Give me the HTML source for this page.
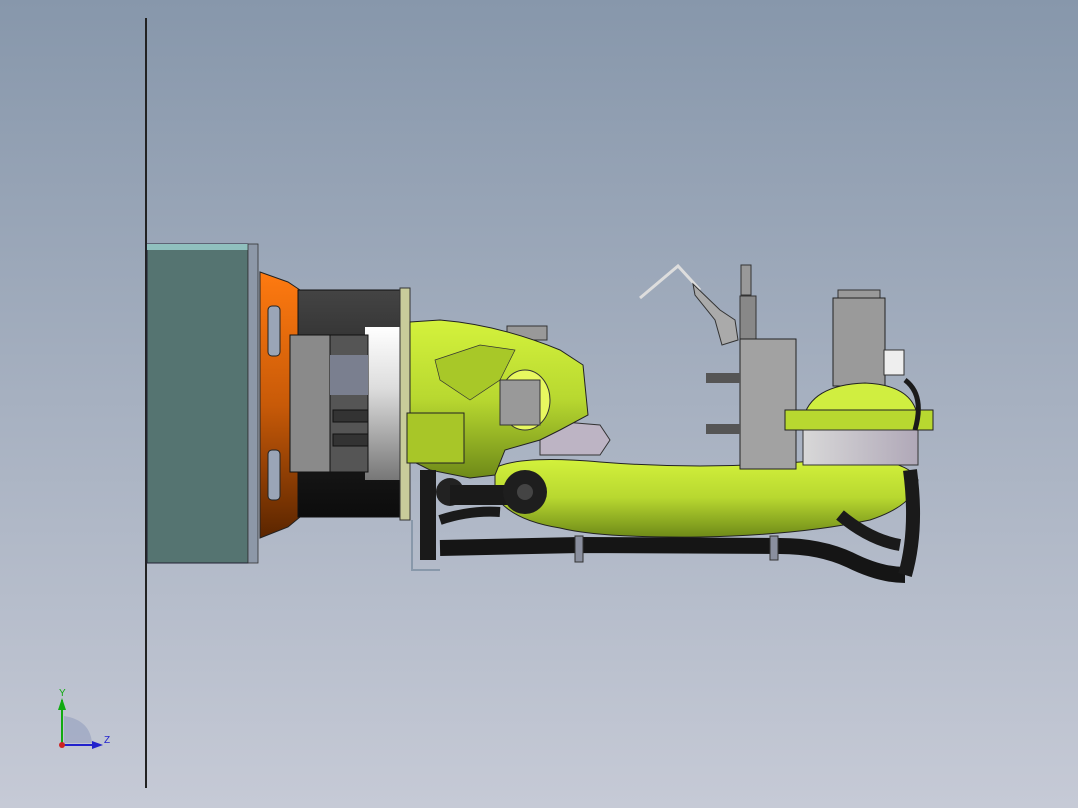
<!DOCTYPE html>
<html><head><style>
html,body{margin:0;padding:0;width:1078px;height:808px;overflow:hidden;background:linear-gradient(#8797ab,#c6cad6);}
svg{position:absolute;left:0;top:0}
</style></head><body>
<svg width="1078" height="808" viewBox="0 0 1078 808" xmlns="http://www.w3.org/2000/svg">
<defs>
<linearGradient id="drum" x1="0" y1="0" x2="0" y2="1"><stop offset="0" stop-color="#444"/><stop offset="0.5" stop-color="#222"/><stop offset="1" stop-color="#0c0c0c"/></linearGradient>
<linearGradient id="white" x1="0" y1="0" x2="0" y2="1"><stop offset="0" stop-color="#fff"/><stop offset="0.4" stop-color="#ddd"/><stop offset="1" stop-color="#777"/></linearGradient>
<linearGradient id="org" x1="0" y1="0" x2="0" y2="1"><stop offset="0" stop-color="#ff7a10"/><stop offset="0.5" stop-color="#c85a08"/><stop offset="1" stop-color="#5a2500"/></linearGradient>
<linearGradient id="grn" x1="0" y1="0" x2="0" y2="1"><stop offset="0" stop-color="#d4f23c"/><stop offset="0.5" stop-color="#b8d830"/><stop offset="1" stop-color="#6e8a18"/></linearGradient>
<linearGradient id="ring" x1="0" y1="0" x2="1" y2="0"><stop offset="0" stop-color="#d8d8d8"/><stop offset="1" stop-color="#b0a8b8"/></linearGradient>
</defs>
<rect x="145" y="18" width="2" height="770" fill="#222"/>
<!-- teal box -->
<rect x="147" y="244" width="101" height="319" fill="#557471" stroke="#223" stroke-width="1"/>
<rect x="147" y="244" width="101" height="6" fill="#90c0be"/>
<rect x="248" y="244" width="10" height="319" fill="#8d98a8" stroke="#333" stroke-width="0.8"/>
<!-- orange flange -->
<path d="M260 272 L288 282 L300 290 L300 517 L288 527 L260 538 Z" fill="url(#org)" stroke="#222"/>
<rect x="268" y="306" width="12" height="50" rx="4" fill="#9aa5b7" stroke="#222"/>
<rect x="268" y="450" width="12" height="50" rx="4" fill="#9aa5b7" stroke="#222"/>
<!-- drum -->
<rect x="298" y="290" width="102" height="227" fill="url(#drum)" stroke="#111"/>
<rect x="365" y="327" width="35" height="153" fill="url(#white)"/>
<rect x="290" y="335" width="40" height="137" fill="#8a8a8a" stroke="#111"/>
<rect x="330" y="335" width="38" height="137" fill="#555" stroke="#111"/>
<rect x="330" y="355" width="38" height="40" fill="#7a7f8f"/>
<rect x="333" y="410" width="35" height="12" fill="#333" stroke="#111"/>
<rect x="333" y="434" width="35" height="12" fill="#333" stroke="#111"/>
<rect x="400" y="288" width="10" height="232" fill="#c8cc9a" stroke="#333"/>
<!-- back parts near arm -->
<rect x="507" y="326" width="40" height="14" fill="#999" stroke="#333"/>
<path d="M540 420 L600 425 L610 440 L600 455 L540 455 Z" fill="#bdb4c4" stroke="#333"/>
<!-- lower arm -->
<path d="M495 468 Q520 455 600 462 Q700 470 800 462 L860 458 Q910 462 918 480 Q915 505 870 520 Q800 535 700 537 Q600 538 560 528 Q510 520 495 495 Z" fill="url(#grn)" stroke="#222"/>
<!-- main green body -->
<path d="M410 322 L440 320 Q500 325 560 350 L583 365 L588 415 L560 430 L540 440 L505 450 L495 475 L470 478 L430 470 L410 460 Z" fill="url(#grn)" stroke="#222"/>
<path d="M435 360 L480 345 L515 350 L500 380 L470 400 L440 380 Z" fill="#a8c828" stroke="#333" stroke-width="0.7"/>
<ellipse cx="525" cy="400" rx="25" ry="30" fill="#e8f860" stroke="#333"/>
<rect x="500" y="380" width="40" height="45" fill="#999" stroke="#333"/>
<rect x="407" y="413" width="57" height="50" fill="#a8c628" stroke="#222"/>
<!-- joints -->
<circle cx="450" cy="492" r="14" fill="#222"/>
<rect x="450" y="485" width="70" height="20" fill="#1a1a1a"/>
<circle cx="525" cy="492" r="22" fill="#1e1e1e"/>
<circle cx="525" cy="492" r="8" fill="#444"/>
<!-- left hoses -->
<path d="M428 470 L428 560" stroke="#1a1a1a" stroke-width="16" fill="none"/>
<path d="M412 520 L412 570 L440 570" stroke="#8898aa" stroke-width="2" fill="none"/>
<path d="M440 548 L580 545 L780 546 Q820 546 850 560 Q880 575 905 575" stroke="#151515" stroke-width="16" fill="none"/>
<path d="M840 515 Q870 540 900 545" stroke="#1a1a1a" stroke-width="12" fill="none"/>
<path d="M910 470 Q918 530 905 575" stroke="#1a1a1a" stroke-width="14" fill="none"/>
<path d="M440 520 Q470 510 500 512" stroke="#1a1a1a" stroke-width="10" fill="none"/>
<rect x="575" y="536" width="8" height="26" fill="#8a8f9e" stroke="#333"/>
<rect x="770" y="536" width="8" height="24" fill="#8a8f9e" stroke="#333"/>
<!-- rear box / handle -->
<path d="M640 298 L678 266 L700 290" stroke="#ddd" stroke-width="3" fill="none"/>
<path d="M693 284 L720 310 L735 320 L738 340 L722 345 L715 320 L695 295 Z" fill="#aaa" stroke="#333"/>
<rect x="741" y="265" width="10" height="30" fill="#999" stroke="#333"/>
<rect x="740" y="296" width="16" height="44" fill="#888" stroke="#333"/>
<rect x="740" y="339" width="56" height="130" fill="#a2a2a2" stroke="#222"/>
<rect x="706" y="373" width="34" height="10" fill="#555"/>
<rect x="706" y="424" width="34" height="10" fill="#555"/>
<!-- rear motor -->
<rect x="838" y="290" width="42" height="15" fill="#999" stroke="#333"/>
<rect x="833" y="298" width="52" height="88" fill="#9a9a9a" stroke="#222"/>
<rect x="884" y="350" width="20" height="25" fill="#eee" stroke="#333"/>
<path d="M803 420 Q810 385 865 383 Q915 385 918 420 Z" fill="#d0ee40" stroke="#222"/>
<rect x="785" y="410" width="148" height="20" fill="#b8d830" stroke="#222"/>
<rect x="803" y="430" width="115" height="35" fill="url(#ring)" stroke="#333"/>
<path d="M905 380 Q925 395 915 430" stroke="#1a1a1a" stroke-width="5" fill="none"/>
<!-- axes -->
<line x1="62" y1="745" x2="62" y2="700" stroke="#1a1" stroke-width="2"/>
<polygon points="58,710 62,698 66,710" fill="#1a1"/>
<line x1="62" y1="745" x2="100" y2="745" stroke="#22c" stroke-width="2"/>
<polygon points="92,741 103,745 92,749" fill="#22c"/>
<path d="M64 743 L64 716 Q90 720 92 743 Z" fill="#9aa4c0" opacity="0.7"/>
<circle cx="62" cy="745" r="3" fill="#c22"/>
<text x="59" y="696" font-family="Liberation Sans, sans-serif" font-size="10" fill="#1a1">Y</text>
<text x="104" y="743" font-family="Liberation Sans, sans-serif" font-size="10" fill="#22c">Z</text>
</svg>
</body></html>
